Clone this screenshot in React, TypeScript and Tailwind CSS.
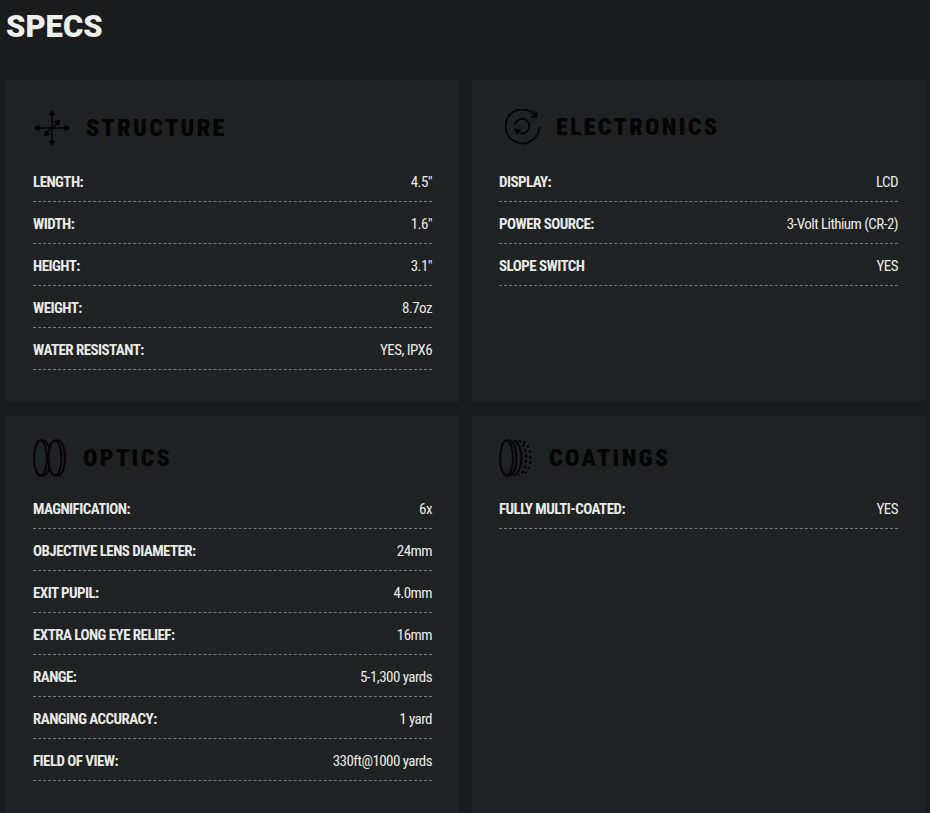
import React from "react";

type Row = [string, string];

const Move = () => (
  <svg width="38" height="38" viewBox="0 0 38 38" fill="#050505" stroke="#050505" strokeWidth="1.3" className="block">
    <path d="M19 3V35M3 19H35M12 26L26 12" fill="none" />
    <path d="M19 1l-3 5h6zM19 37l-3-5h6zM1 19l5-3v6zM37 19l-5-3v6z" strokeWidth="0.5" />
    <path d="M27 11l-6 1.500 4.500 4.500zM11 27l6-1.500-4.500-4.500z" strokeWidth="0.5" />
  </svg>
);

const Cycle = () => (
  <svg width="36" height="36" viewBox="0 0 36 36" fill="none" stroke="#050505" strokeWidth="1.9" className="block">
    <path d="M34.500 17.500A17 17 0 1 1 31 7" />
    <path d="M31 2.500L31.700 8.200 26 7.500" />
    <path d="M10 15.500A7.300 7.300 0 1 1 15 24.200" />
    <path d="M9.500 20l6.500 1-4 4.800z" fill="#050505" strokeWidth="0.8" />
  </svg>
);

const Lens = () => (
  <svg width="33" height="38" viewBox="0 0 33 38" fill="none" stroke="#050505" strokeWidth="2" className="block">
    <ellipse cx="7.500" cy="19" rx="6.500" ry="17.500" />
    <path d="M7.500 1.500H10C14.500 1.500 17.500 9 17.500 19S14.500 36.500 10 36.500H7.500" />
    <ellipse cx="22" cy="19" rx="6.500" ry="17.500" fill="#1f2324" />
    <path d="M22 1.500H24.500C29 1.500 32 9 32 19S29 36.500 24.500 36.500H22" />
  </svg>
);

const Coat = () => (
  <svg width="33" height="38" viewBox="0 0 33 38" fill="none" stroke="#050505" strokeWidth="2" className="block">
    <ellipse cx="7.500" cy="19" rx="6.500" ry="17.500" />
    <path d="M7.500 1.500H10C14.500 1.500 17.500 9 17.500 19S14.500 36.500 10 36.500H7.500" />
    <path d="M14.500 1.500C19.500 3 22.500 10 22.500 19S19.500 35 14.500 36.500" />
    <path d="M19.500 1.500C25 4 27 11 27 19S25 34 19.500 36.500" strokeDasharray="3 2.500" />
    <path d="M24.500 2.500C29.500 6 31.500 12 31.500 19S29.500 32 24.500 35.500" strokeWidth="2.200" strokeDasharray="2.500 3" />
  </svg>
);

function Panel({ icon, title, rows, gap, head, grow }: { icon: React.ReactNode; title: string; rows: Row[]; gap: string; head: string; grow?: boolean }) {
  return (
    <section className={`bg-[#1f2324] px-[27px] pb-[31px] ${grow ? "min-h-[420px]" : ""}`}>
      <div className={`flex items-center ${gap} ${head}`}>
        {icon}
        <h3 className="text-[#050505] text-[24px] leading-none font-black tracking-[2.3px] font-['Roboto_Condensed','Liberation_Sans_Narrow','Roboto',sans-serif]">{title}</h3>
      </div>
      {rows.map(([k, v]) => (
        <div key={k} className="flex h-[42px] items-center justify-between border-b border-dashed border-[#77797a] pt-[4px] text-[#e9e9e6] text-[15px] font-['Roboto_Condensed','Liberation_Sans_Narrow','Roboto',sans-serif]">
          <span className="font-bold tracking-[-0.55px]">{k}</span>
          <span className="tracking-[-0.55px]">{v}</span>
        </div>
      ))}
    </section>
  );
}

export default function App() {
  return (
    <div className="h-[813px] w-[930px] overflow-hidden bg-[#1a1c1e]">
      <h2 className="pl-[6px] pt-[10px] h-[80px] text-[#eeeeea] text-[31px] leading-[34px] font-black font-['Roboto','Liberation_Sans',sans-serif]">SPECS</h2>
      <div className="grid grid-cols-[453px_453px] gap-x-[13px] gap-y-[15px] pl-[6px]">
        <Panel icon={<Move />} title="STRUCTURE" gap="gap-[15px]" head="h-[80px] pt-[15px]" rows={[["LENGTH:", '4.5"'], ["WIDTH:", '1.6"'], ["HEIGHT:", '3.1"'], ["WEIGHT:", "8.7oz"], ["WATER RESISTANT:", "YES, IPX6"]]} />
        <Panel icon={<Cycle />} title="ELECTRONICS" gap="gap-[15px] pl-[6px]" head="h-[80px] pt-[13px]" rows={[["DISPLAY:", "LCD"], ["POWER SOURCE:", "3-Volt Lithium (CR-2)"], ["SLOPE SWITCH", "YES"]]} />
        <Panel grow icon={<Lens />} title="OPTICS" gap="gap-[17px]" head="h-[71px] pt-[12px]" rows={[["MAGNIFICATION:", "6x"], ["OBJECTIVE LENS DIAMETER:", "24mm"], ["EXIT PUPIL:", "4.0mm"], ["EXTRA LONG EYE RELIEF:", "16mm"], ["RANGE:", "5-1,300 yards"], ["RANGING ACCURACY:", "1 yard"], ["FIELD OF VIEW:", "330ft@1000 yards"]]} />
        <Panel grow icon={<Coat />} title="COATINGS" gap="gap-[17px]" head="h-[71px] pt-[12px]" rows={[["FULLY MULTI-COATED:", "YES"]]} />
      </div>
    </div>
  );
}
